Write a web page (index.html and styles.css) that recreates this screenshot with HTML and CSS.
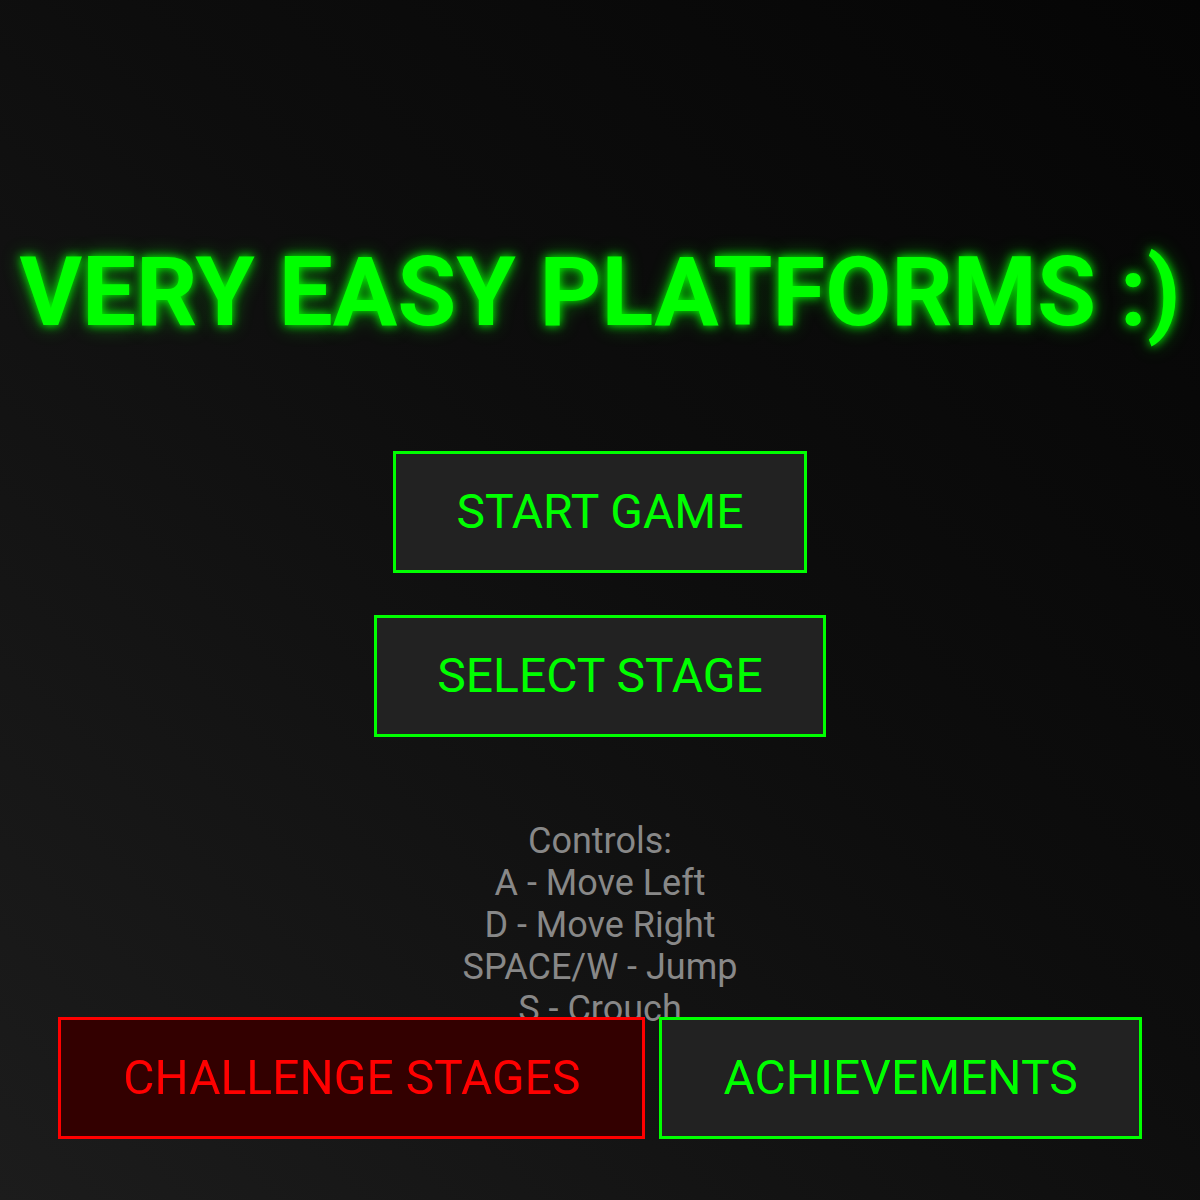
FILE: index.html
```html
<!DOCTYPE html>
<html>
<head>
<meta charset="utf-8">
<link rel="stylesheet" href="styles.css">
</head>
<body>
<main class="menu">
  <h1 class="title">VERY EASY PLATFORMS :)</h1>
  <div class="main-buttons">
    <button class="btn">START GAME</button>
    <button class="btn">SELECT STAGE</button>
  </div>
  <div class="controls">
    <div>Controls:</div>
    <div>A - Move Left</div>
    <div>D - Move Right</div>
    <div>SPACE/W - Jump</div>
    <div>S - Crouch</div>
  </div>
</main>
<div class="bottom-bar">
  <button class="btn btn-red">CHALLENGE STAGES</button>
  <button class="btn btn-wide">ACHIEVEMENTS</button>
</div>
</body>
</html>
```
FILE: styles.css
```css
html, body {
  margin: 0;
  padding: 0;
  height: 100%;
}
body {
  background: linear-gradient(45deg, #1c1c1c 0%, #0d0d0d 55%, #050505 100%);
  font-family: Roboto, "Liberation Sans", sans-serif;
  overflow: hidden;
  color: #00ff00;
}
.menu {
  display: flex;
  flex-direction: column;
  align-items: center;
  padding-top: 236px;
}
.title {
  margin: 0;
  font-size: 96px;
  font-weight: 700;
  line-height: 1.172;
  color: #00ff00;
  text-shadow: 0 0 10px #00ff00, 0 0 20px rgba(0, 255, 0, 0.45);
  white-space: nowrap;
}
.main-buttons {
  display: flex;
  flex-direction: column;
  align-items: center;
  gap: 42px;
  margin-top: 102px;
}
.btn {
  font-family: Roboto, "Liberation Sans", sans-serif;
  font-size: 48px;
  line-height: 56px;
  padding: 30px 60px;
  background: #222222;
  color: #00ff00;
  border: 3px solid #00ff00;
  border-radius: 0;
  cursor: pointer;
}
.btn-red {
  padding: 30px 62px;
  background: #330000;
  color: #ff0000;
  border-color: #ff0000;
}
.btn-wide {
  padding: 30px 61px;
}
.controls {
  margin-top: 83px;
  text-align: center;
  color: #888888;
  font-size: 36px;
  line-height: 42px;
}
.bottom-bar {
  position: fixed;
  left: 0;
  right: 0;
  bottom: 61px;
  display: flex;
  justify-content: center;
  gap: 14px;
}
```
